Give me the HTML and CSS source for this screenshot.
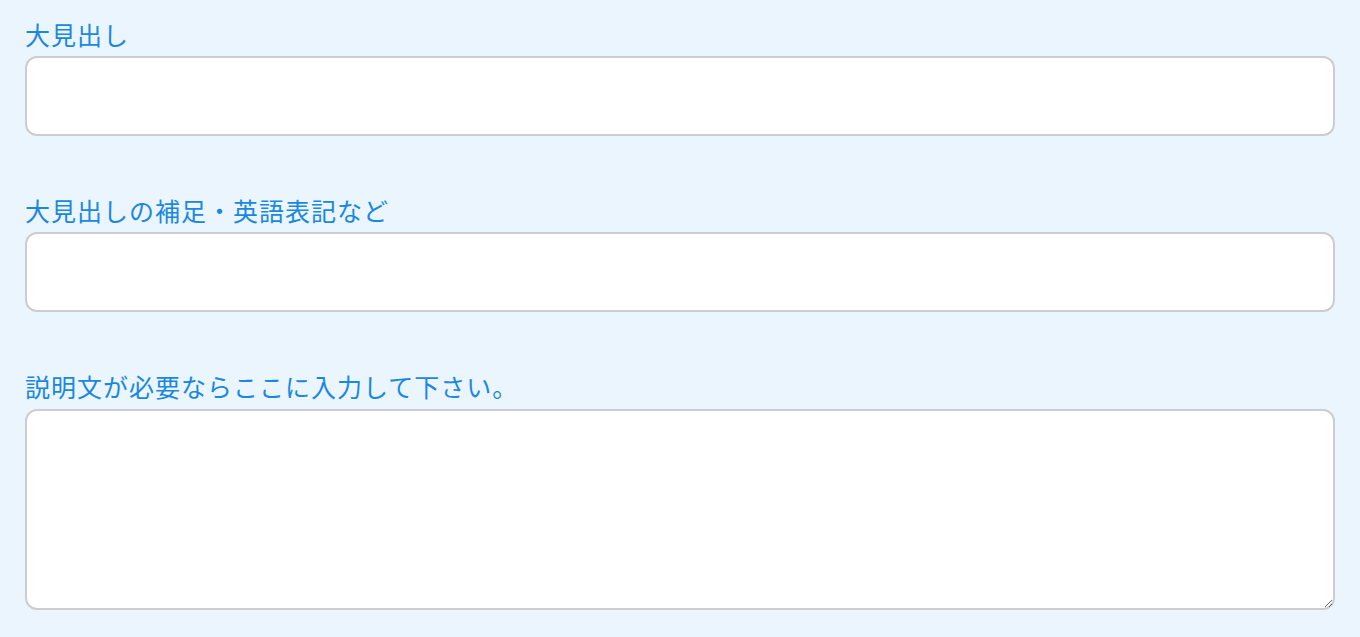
FILE: index.html
```html
<!DOCTYPE html>
<html lang="ja">
<head>
<meta charset="utf-8">
<link rel="stylesheet" href="styles.css">
</head>
<body>
<form class="form">
  <div class="field">
    <label class="label" for="h1">大見出し</label>
    <input class="input" id="h1" type="text">
  </div>
  <div class="field">
    <label class="label" for="h1sub">大見出しの補足・英語表記など</label>
    <input class="input" id="h1sub" type="text">
  </div>
  <div class="field field-desc">
    <label class="label" for="desc">説明文が必要ならここに入力して下さい。</label>
    <textarea class="textarea" id="desc"></textarea>
  </div>
</form>
</body>
</html>
```
FILE: styles.css
```css
html, body {
  margin: 0;
  padding: 0;
  background: #eaf5fe;
  height: 100%;
}
body {
  font-family: "Noto Sans CJK JP", "Noto Sans", sans-serif;
}
.form {
  display: flex;
  flex-direction: column;
  gap: 58px;
  padding: 18px 25px 0 25px;
}
.field {
  display: flex;
  flex-direction: column;
  gap: 6px;
}
.field-desc {
  gap: 7px;
}
.label {
  color: #1a87e2;
  font-size: 25px;
  line-height: 32px;
  letter-spacing: 1px;
}
.input, .textarea {
  box-sizing: border-box;
  width: 100%;
  margin: 0;
  border: 2px solid #cdcdcd;
  border-radius: 12px;
  background: #fff;
  font-size: 20px;
  padding: 8px 12px;
  outline: none;
}
.input {
  height: 80px;
}
.textarea {
  height: 201px;
  resize: vertical;
  display: block;
}
```
